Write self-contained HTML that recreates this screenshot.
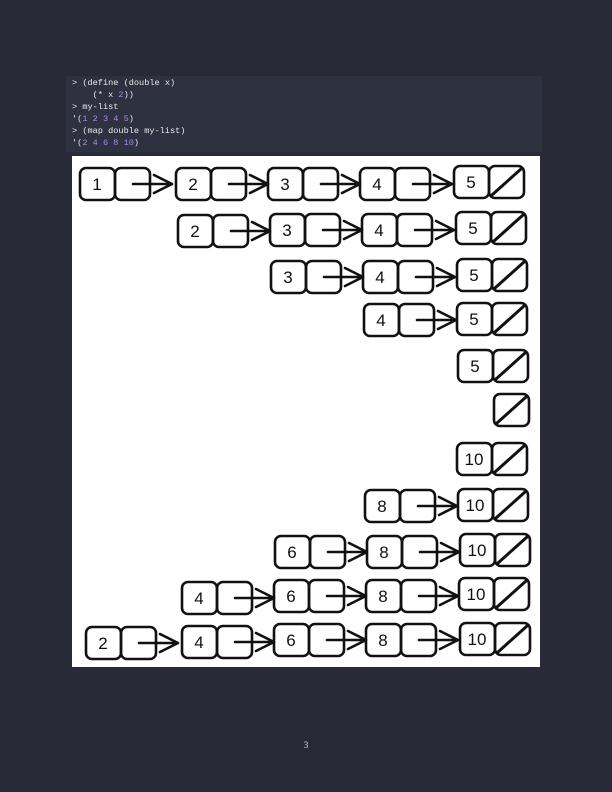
<!DOCTYPE html>
<html><head><style>
body{margin:0;width:612px;height:792px;background:#282a37;position:relative;overflow:hidden}
.code{position:absolute;left:66px;top:76px;width:476px;height:76px;background:#2e3140;font:8.6px/12px "Liberation Mono",monospace;color:#e8e8ee;padding:1px 0 0 6px;box-sizing:border-box;white-space:pre}
.n{color:#a88be8}
.pn{position:absolute;left:0;width:612px;top:740px;text-align:center;font:9px "Liberation Serif",serif;color:#ddd}
svg{position:absolute;left:72px;top:156px}
</style></head><body>
<div class="code">&gt; (define (double x)
    (* x <span class="n">2</span>))
&gt; my-list
'(<span class="n">1 2 3 4 5</span>)
&gt; (map double my-list)
'(<span class="n">2 4 6 8 10</span>)</div>
<svg width="468" height="511" viewBox="72 156 468 511" xmlns="http://www.w3.org/2000/svg">
<rect x="72" y="156" width="468" height="511" fill="#fff"/>
<defs>
<g id="p" fill="none" stroke="#111" stroke-width="2.6" stroke-linejoin="round" stroke-linecap="round">
<rect x="0" y="-16" width="35" height="32" rx="6"/>
<rect x="35" y="-16" width="35" height="32" rx="6"/>
<path d="M53 0 H92 M74 -9 L92 0 L74 9"/>
</g>
<g id="l" fill="none" stroke="#111" stroke-width="2.6" stroke-linejoin="round" stroke-linecap="round">
<rect x="0" y="-16" width="35" height="32" rx="6"/>
<rect x="35" y="-16" width="35" height="32" rx="6"/>
<path d="M38 13 L67 -13" stroke-width="3"/>
</g>
<g id="z" fill="none" stroke="#111" stroke-width="2.6" stroke-linejoin="round" stroke-linecap="round">
<rect x="0" y="-16" width="35" height="32" rx="6"/>
<path d="M3 13 L32 -13" stroke-width="3"/>
</g>
</defs>
<g font-family="Liberation Sans,sans-serif" font-size="17" text-anchor="middle" fill="#111">
<use href="#p" x="80" y="184"/><use href="#p" x="176" y="184"/><use href="#p" x="268" y="184"/><use href="#p" x="360" y="184"/><use href="#l" x="454" y="182"/>
<text x="97" y="190">1</text><text x="193" y="190">2</text><text x="285" y="190">3</text><text x="377" y="190">4</text><text x="471" y="188">5</text>
<use href="#p" x="178" y="231"/><use href="#p" x="270" y="230"/><use href="#p" x="362" y="230"/><use href="#l" x="456" y="228"/>
<text x="195" y="237">2</text><text x="287" y="236">3</text><text x="379" y="236">4</text><text x="473" y="234">5</text>
<use href="#p" x="271" y="277"/><use href="#p" x="363" y="277"/><use href="#l" x="457" y="275"/>
<text x="288" y="283">3</text><text x="380" y="283">4</text><text x="474" y="281">5</text>
<use href="#p" x="364" y="320"/><use href="#l" x="457" y="319"/>
<text x="381" y="326">4</text><text x="474" y="325">5</text>
<use href="#l" x="458" y="366"/><text x="475" y="372">5</text>
<use href="#z" x="494" y="410"/>
<use href="#l" x="457" y="459"/><text x="474" y="465">10</text>
<use href="#p" x="365" y="506"/><use href="#l" x="458" y="505"/>
<text x="382" y="512">8</text><text x="475" y="511">10</text>
<use href="#p" x="275" y="552"/><use href="#p" x="367" y="552"/><use href="#l" x="460" y="550"/>
<text x="292" y="558">6</text><text x="384" y="558">8</text><text x="477" y="556">10</text>
<use href="#p" x="182" y="598"/><use href="#p" x="274" y="596"/><use href="#p" x="366" y="596"/><use href="#l" x="459" y="594"/>
<text x="199" y="604">4</text><text x="291" y="602">6</text><text x="383" y="602">8</text><text x="476" y="600">10</text>
<use href="#p" x="86" y="643"/><use href="#p" x="182" y="642"/><use href="#p" x="274" y="640"/><use href="#p" x="366" y="640"/><use href="#l" x="460" y="639"/>
<text x="103" y="649">2</text><text x="199" y="648">4</text><text x="291" y="646">6</text><text x="383" y="646">8</text><text x="477" y="645">10</text>
</g>
</svg>
<div class="pn">3</div>
</body></html>
